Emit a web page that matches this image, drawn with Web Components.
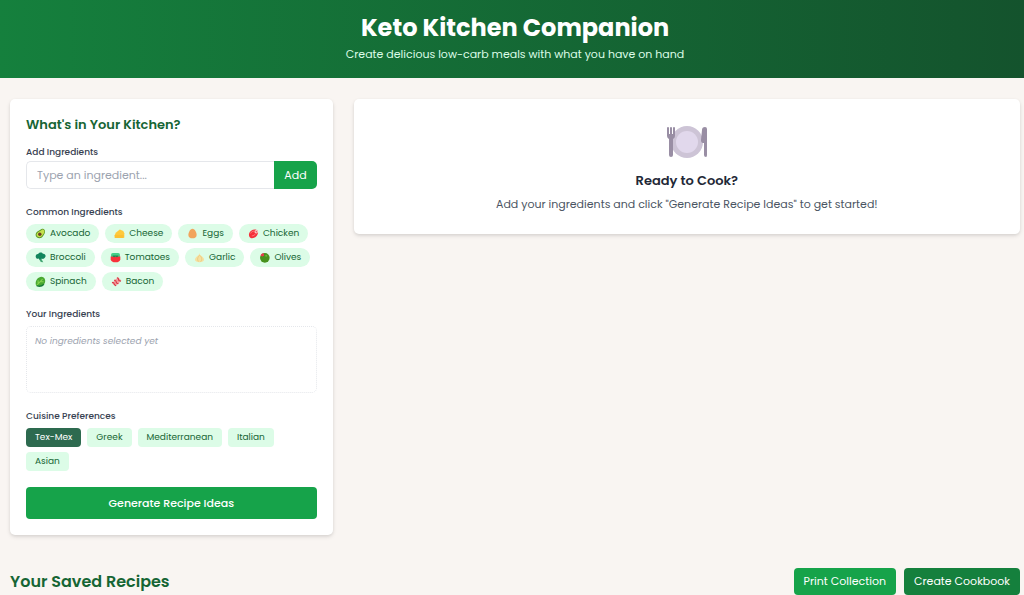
<!DOCTYPE html>
<html lang="en">
<head>
<meta charset="utf-8">
<meta name="viewport" content="width=device-width, initial-scale=1">
<title>Keto Kitchen Companion</title>
<style>
body{margin:0;background:#f9f5f2;font-family:Poppins,Inter,"Open Sans",sans-serif;color:#1f2937}
</style>
</head>
<body>
<keto-app></keto-app>
<script>
const define = (name, html, setup) => customElements.define(name, class extends HTMLElement {
  connectedCallback() {
    if (this.shadowRoot) return;
    const t = document.createElement('template');
    t.innerHTML = html;
    this.attachShadow({mode: 'open'}).append(t.content.cloneNode(true));
    if (setup) setup(this, this.shadowRoot);
  }
});

const icons = {
  avocado: '<path d="M19 3c6-3 11 2 10 9-1 5-4 8-6 12-3 6-12 8-18 3-5-5-4-13 2-17 4-3 8-4 12-7z" fill="#5b9a26"/><path d="M20 5c5-2 8 2 7 7-1 4-4 7-6 10-3 5-9 6-14 3-4-4-3-10 2-13 4-3 8-4 11-7z" fill="#c5e04d"/><circle cx="14" cy="18" r="5" fill="#6b3f22"/>',
  cheese: '<path d="M2 22 5 14 17 4l10 5 3 6v13H3z" fill="#ffc93c"/><path d="M2 20h26v9H2z" fill="#fcc132"/>',
  egg: '<path d="M16 2c7 0 12 11 12 18 0 6-5 10-12 10S4 26 4 20C4 13 9 2 16 2z" fill="#f2a45c"/>',
  chicken: '<path d="M3 17C5 8 15 3 24 5c6 2 7 9 3 15-4 7-12 11-19 9-4-1-6-7-5-12z" fill="#f5303a"/><circle cx="24" cy="11" r="5" fill="#ffd0cf"/><circle cx="24" cy="11" r="2" fill="#d83b48"/><path d="M7 16c3-5 7-7 12-7M11 23c5 0 9-3 11-6" stroke="#ff9294" stroke-width="2" fill="none"/>',
  broccoli: '<path d="m16 15 8 15-7-1-7-11z" fill="#45a775"/><path d="M4 18C-1 12 4 5 9 6c2-6 12-6 14-1 7-1 10 7 6 11-2 4-7 5-9 3-3 4-8 3-9-1-2 2-5 2-7 0z" fill="#11855c"/>',
  tomato: '<rect x="3" y="3" width="26" height="14" rx="5" fill="#44cf88"/><path d="M2 13h28v8c0 6-6 9-14 9S2 27 2 21z" fill="#f8313a"/><path d="m8 13 4 2 4-2 4 2 4-2v-3H8z" fill="#20834f"/>',
  garlic: '<path d="M16 2c0 7 4 8 10 13 8 9 0 15-10 15S-2 24 6 15c6-5 9-6 10-13z" fill="#f6e0a0"/><path d="M16 10c-7 7-7 14-2 18m3-18c7 7 7 14 2 18" stroke="#e5c376" stroke-width="2" fill="none"/>',
  olive: '<circle cx="17" cy="17" r="14" fill="#47911d"/><path d="M5 11C5 6 9 3 14 4l1 7-6 2z" fill="#e83b4e"/><circle cx="21" cy="11" r="3" fill="#69b239"/>',
  spinach: '<path d="M3 27C0 17 4 8 12 4c7-4 15-1 17 6 3 9-4 19-15 19-5 0-6 1-11-2z" fill="#49a832"/><path d="M4 28 22 9m-13 14V12m6 5h10" stroke="#86d44f" stroke-width="3" fill="none"/><path d="M5 28c7 3 16 1 21-4" stroke="#187b37" stroke-width="4" fill="none"/>',
  bacon: '<path d="m2 20 6-4 2-6 6-1 4-6 10 10-5 4-2 6-6 2-4 5z" fill="#f39a9d"/><path d="m3 18 5 2 2 5 5 4M9 12l5 2 2 6 5 3M17 5l4 2 2 6 6 2" stroke="#d6323d" stroke-width="3" fill="none"/>'
};

define('site-header', `<style>
:host{display:block;background:linear-gradient(90deg,#15803d,#14532d);color:#fff;text-align:center}
header{padding:11px 0 14px 6px}
h1{margin:0;font-size:24px;line-height:34px;font-weight:700}
p{margin:0;font-size:11px;line-height:19px;color:#dcfce7}
</style><header><h1><slot name="title"></slot></h1><p><slot></slot></p></header>`);

define('ui-card', `<style>
:host{display:block;background:#fff;border-radius:5px;box-shadow:0 2px 4px rgba(0,0,0,.1),0 1px 3px rgba(0,0,0,.06)}
</style><slot></slot>`);

define('form-group', `<style>
:host{display:block}
h3{margin:0 0 5px;font-size:9px;line-height:14px;font-weight:500;color:#374151}
</style><h3><slot name="label"></slot></h3><slot></slot>`);

define('ingredient-chip', `<style>
:host{display:block}
button{display:flex;align-items:center;gap:4px;height:19px;padding:0 9px;border:0;border-radius:10px;background:#dcfce7;color:#166534;font-family:inherit;font-size:9px;line-height:19px}
svg{width:11px;height:11px;display:block}
</style><button type="button"><svg viewBox="0 0 32 32" aria-hidden="true"></svg><span><slot></slot></span></button>`,
(el, root) => { root.querySelector('svg').innerHTML = icons[el.getAttribute('icon')]; });

define('cuisine-tag', `<style>
:host{display:block}
button{display:block;height:19px;padding:0 9px;border:0;border-radius:4px;background:#dcfce7;color:#166534;font-family:inherit;font-size:9px;line-height:19px}
:host([selected]) button{background:#2d6a4f;color:#fff}
</style><button type="button"><slot></slot></button>`,
(el, root) => root.querySelector('button').setAttribute('aria-pressed', el.hasAttribute('selected')));

define('action-button', `<style>
:host{display:block}
button{display:block;width:100%;padding:0 10px;border:0;border-radius:4px;background:#16a34a;color:#fff;font-family:inherit;font-size:11px;line-height:27px}
:host([dark]) button{background:#15803d}
:host([large]) button{font-weight:500;line-height:32px}
</style><button type="button"><slot></slot></button>`);

define('ingredient-form', `<style>
:host{display:block}
label{display:block;margin-bottom:2px;font-size:9px;line-height:14px;font-weight:500;color:#374151}
form{display:flex;height:28px}
input{flex:1;min-width:0;box-sizing:border-box;border:1px solid #e5e7eb;border-right:0;border-radius:5px 0 0 5px;padding:0 10px;background:#fff;font-family:inherit;font-size:11px;color:#1f2937}
input::placeholder{color:#9ca3af;opacity:1}
button{border:0;border-radius:0 5px 5px 0;padding:0 10px;background:#16a34a;color:#fff;font-family:inherit;font-size:11px}
</style><label for="ingredient">Add Ingredients</label>
<form><input id="ingredient" type="text" placeholder="Type an ingredient..."><button type="button">Add</button></form>`);

define('kitchen-panel', `<style>
:host{display:block}
.body{display:grid;gap:16px;padding:16px}
h2{margin:0 0 10px;font-size:13px;line-height:20px;font-weight:600;color:#166534}
.wrap{display:flex;flex-wrap:wrap;gap:5px 6px}
.selected{box-sizing:border-box;min-height:67px;border:1px dotted #e5e7eb;border-radius:5px;padding:6px 8px}
.selected p{margin:0;font-size:9px;line-height:16px;font-style:italic;color:#9ca3af}
</style><ui-card><div class="body">
<div><h2>What's in Your Kitchen?</h2><ingredient-form></ingredient-form></div>
<form-group><span slot="label">Common Ingredients</span><div class="wrap">
<ingredient-chip icon="avocado">Avocado</ingredient-chip><ingredient-chip icon="cheese">Cheese</ingredient-chip><ingredient-chip icon="egg">Eggs</ingredient-chip><ingredient-chip icon="chicken">Chicken</ingredient-chip>
<ingredient-chip icon="broccoli">Broccoli</ingredient-chip><ingredient-chip icon="tomato">Tomatoes</ingredient-chip><ingredient-chip icon="garlic">Garlic</ingredient-chip><ingredient-chip icon="olive">Olives</ingredient-chip>
<ingredient-chip icon="spinach">Spinach</ingredient-chip><ingredient-chip icon="bacon">Bacon</ingredient-chip></div></form-group>
<form-group><span slot="label">Your Ingredients</span><div class="selected"><p>No ingredients selected yet</p></div></form-group>
<form-group><span slot="label">Cuisine Preferences</span><div class="wrap"><cuisine-tag selected>Tex-Mex</cuisine-tag><cuisine-tag>Greek</cuisine-tag><cuisine-tag>Mediterranean</cuisine-tag><cuisine-tag>Italian</cuisine-tag><cuisine-tag>Asian</cuisine-tag></div></form-group>
<action-button large>Generate Recipe Ideas</action-button>
</div></ui-card>`);

define('recipe-welcome', `<style>
:host{display:block}
.body{display:flex;flex-direction:column;align-items:center;padding:26px 16px 19px;text-align:center}
svg{display:block;width:42px;height:34px;margin-bottom:10px}
h2{margin:0;font-size:13px;line-height:24px;font-weight:600}
p{margin:0;font-size:11px;line-height:22px;color:#4b5563}
</style><ui-card><div class="body">
<svg viewBox="0 0 42 34" aria-hidden="true"><circle cx="21" cy="17" r="16" fill="#cdc4d6"/><circle cx="21" cy="17" r="11" fill="#e1d8ec"/><path d="M1 3q0-1 1-1t1 1v6h1V3q0-1 1-1t1 1v6h1V3q0-1 1-1t1 1v8q0 2-2 3v16q0 2-2 2t-2-2V14q-2-1-2-3z" fill="#998ea4"/><path d="M36 5q0-3 3-3 2 0 2 2v26q0 2-1 2-2 0-2-2V18h-1q-2 0-2-3z" fill="#998ea4"/></svg>
<h2>Ready to Cook?</h2><p>Add your ingredients and click "Generate Recipe Ideas" to get started!</p>
</div></ui-card>`);

define('saved-recipes', `<style>
:host{display:block}
section{display:flex;align-items:center;justify-content:space-between}
h2{margin:0;font-size:16px;line-height:27px;font-weight:600;color:#166534}
.actions{display:flex;gap:8px}
</style><section><h2>Your Saved Recipes</h2><div class="actions"><action-button>Print Collection</action-button><action-button dark>Create Cookbook</action-button></div></section>`);

define('keto-app', `<style>
:host{display:block}
main{padding:21px 4px 0 10px}
.columns{display:grid;grid-template-columns:repeat(3,minmax(0,1fr));gap:21px;align-items:start;margin-bottom:33px}
recipe-welcome{grid-column:span 2}
@media(max-width:700px){.columns{grid-template-columns:1fr}recipe-welcome{grid-column:auto}}
</style><site-header><span slot="title">Keto Kitchen Companion</span>Create delicious low-carb meals with what you have on hand</site-header>
<main><div class="columns"><kitchen-panel></kitchen-panel><recipe-welcome></recipe-welcome></div><saved-recipes></saved-recipes></main>`);
</script>
</body>
</html>
